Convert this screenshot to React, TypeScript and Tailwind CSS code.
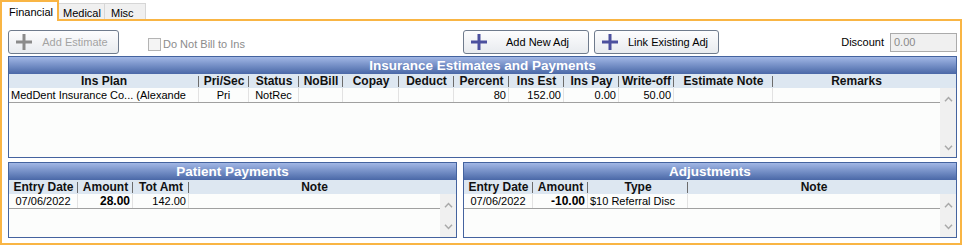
type Align = 'left' | 'right' | 'center';
type Col = { label: string; w: number; align: Align; pad?: string };
type Cell = { text: string; bold?: boolean };

const insCols: Col[] = [
  { label: 'Ins Plan', w: 190, align: 'left', pad: 'pl-[2px]' },
  { label: 'Pri/Sec', w: 50, align: 'center' },
  { label: 'Status', w: 50, align: 'center' },
  { label: 'NoBill', w: 44, align: 'center' },
  { label: 'Copay', w: 56, align: 'right' },
  { label: 'Deduct', w: 55, align: 'right' },
  { label: 'Percent', w: 55, align: 'right' },
  { label: 'Ins Est', w: 55, align: 'right' },
  { label: 'Ins Pay', w: 55, align: 'right' },
  { label: 'Write-off', w: 55, align: 'right' },
  { label: 'Estimate Note', w: 99, align: 'left' },
  { label: 'Remarks', w: 167, align: 'left' },
];

const insRow: Cell[] = [
  { text: 'MedDent Insurance Co... (Alexande' },
  { text: 'Pri' },
  { text: 'NotRec' },
  { text: '' },
  { text: '' },
  { text: '' },
  { text: '80' },
  { text: '152.00' },
  { text: '0.00' },
  { text: '50.00' },
  { text: '' },
  { text: '' },
];

const payCols: Col[] = [
  { label: 'Entry Date', w: 69, align: 'center' },
  { label: 'Amount', w: 55, align: 'right' },
  { label: 'Tot Amt', w: 56, align: 'right' },
  { label: 'Note', w: 251, align: 'left' },
];

const adjCols: Col[] = [
  { label: 'Entry Date', w: 69, align: 'center' },
  { label: 'Amount', w: 55, align: 'right' },
  { label: 'Type', w: 100, align: 'left', pad: 'pl-[2px]' },
  { label: 'Note', w: 252, align: 'left' },
];

const alignClass: Record<Align, string> = {
  left: 'justify-start',
  right: 'justify-end pr-[2px]',
  center: 'justify-center',
};

function Chevron({ up }: { up?: boolean }) {
  return (
    <svg width="9" height="6" viewBox="0 0 9 6">
      <path
        d={up ? 'M1 5.2 L4.5 1.5 L8 5.2' : 'M1 0.8 L4.5 4.5 L8 0.8'}
        fill="none"
        stroke="#a9a9a9"
        strokeWidth="1.5"
      />
    </svg>
  );
}

function Plus({ color }: { color: string }) {
  return (
    <svg width="16" height="16" viewBox="0 0 16 16" className="shrink-0">
      <path d="M6.5 0h3v6.5H16v3H9.5V16h-3V9.5H0v-3h6.5z" fill={color} />
    </svg>
  );
}

function Grid({
  title,
  cols,
  row,
  className,
  bodyPad,
}: {
  title: string;
  cols: Col[];
  row: Cell[];
  className: string;
  bodyPad: string;
}) {
  return (
    <div className={`flex flex-col border border-[#44639f] bg-[#fcfdfc] ${className}`}>
      <div className="h-[17px] shrink-0 bg-linear-to-b from-[#a2b7e5] to-[#4a68a7] text-center text-[13.5px] font-bold leading-[17px] text-white">
        {title}
      </div>
      <div className="flex h-[14px] shrink-0 bg-[#dde7f1] text-[12px] font-bold leading-[14px] text-[#111]">
        {cols.map((c, i) => (
          <div
            key={c.label}
            style={{ width: c.w }}
            className={`relative shrink-0 whitespace-nowrap text-center ${
              i < cols.length - 1
                ? 'after:absolute after:right-0 after:top-[2px] after:h-[11px] after:w-px after:bg-[#6c6c6c]'
                : ''
            }`}
          >
            {c.label}
          </div>
        ))}
        <div className="flex-1" />
      </div>
      <div className="flex min-h-0 flex-1">
        <div className="flex-1">
          <div className="flex h-[15px] border-b border-[#a0a0a0] text-[11px] leading-[14px] text-black">
            {cols.map((c, i) => (
              <div
                key={c.label}
                style={{ width: c.w }}
                className={`flex shrink-0 items-center whitespace-nowrap overflow-hidden ${alignClass[c.align]} ${c.pad ?? ''} ${
                  i < cols.length - 1 ? 'border-r border-[#e2e2e2]' : ''
                } ${row[i].bold ? 'text-[12px] font-bold' : ''}`}
              >
                {row[i].text}
              </div>
            ))}
          </div>
        </div>
        <div className={`flex w-[16px] shrink-0 flex-col items-center justify-between bg-[#f0f0f0] ${bodyPad}`}>
          <Chevron up />
          <Chevron />
        </div>
      </div>
    </div>
  );
}

function Button({ label, disabled, className }: { label: string; disabled?: boolean; className: string }) {
  return (
    <div
      className={`flex h-[24px] items-center rounded-[3px] border border-[#6f7b8d] bg-linear-to-b from-[#fdfdfe] to-[#e8ebef] pl-[7px] text-[11px] ${
        disabled ? 'text-[#a3a3a3]' : 'text-black'
      } ${className}`}
    >
      <Plus color={disabled ? '#8b8b8b' : '#4c509e'} />
      <span className="flex-1 text-center">{label}</span>
    </div>
  );
}

export default function App() {
  return (
    <div className="h-[247px] w-[963px] bg-white font-['Liberation_Sans',Arial,sans-serif] text-[11px] text-black">
      <div className="flex h-[19px] items-start">
        <div className="relative z-10 h-[21px] w-[59px] border-2 border-b-0 border-[#f9b544] bg-white pl-[7px] pt-[4px] leading-[13px]">
          Financial
        </div>
        <div className="mt-[3px] h-[16px] w-[46px] border border-b-0 border-l-0 border-[#d6d6d6] bg-[#f0f0f0] pl-[4px] pt-[2px] leading-[14px]">
          Medical
        </div>
        <div className="mt-[3px] h-[16px] w-[41px] border border-b-0 border-l-0 border-[#d6d6d6] bg-[#f0f0f0] pl-[6px] pt-[2px] leading-[14px]">
          Misc
        </div>
      </div>

      <div className="flex h-[226px] w-[962px] flex-col border-2 border-[#f9b544] bg-white">
        <div className="mt-[9px] flex h-[24px] items-start">
          <Button label="Add Estimate" disabled className="ml-[6px] w-[111px]" />
          <label className="ml-[29px] mt-[7px] flex w-[315px] items-center gap-[2px] text-[#8c8c8c]">
            <span className="h-[13px] w-[13px] border border-[#b4b4b4] bg-[#f4f4f4]" />
            <span className="leading-[14px]">Do Not Bill to Ins</span>
          </label>
          <Button label="Add New Adj" className="w-[126px]" />
          <Button label="Link Existing Adj" className="ml-[5px] w-[125px]" />
          <div className="flex flex-1 items-center justify-end pt-[3px]">
            <span className="mr-[6px] leading-[19px]">Discount</span>
            <div className="mr-[3px] h-[19px] w-[67px] border border-[#ababab] bg-[#f0f0f0] pl-[3px] leading-[17px] text-[#8a8a8a]">
              0.00
            </div>
          </div>
        </div>

        <Grid
          title="Insurance Estimates and Payments"
          cols={insCols}
          row={insRow}
          className="ml-[6px] mt-[2px] h-[102px] w-[949px]"
          bodyPad="pt-[8px] pb-[6px]"
        />

        <div className="mt-[4px] flex">
          <Grid
            title="Patient Payments"
            cols={payCols}
            row={[{ text: '07/06/2022' }, { text: '28.00', bold: true }, { text: '142.00' }, { text: '' }]}
            className="ml-[6px] h-[76px] w-[449px]"
            bodyPad="pt-[8px] pb-[7px]"
          />
          <Grid
            title="Adjustments"
            cols={adjCols}
            row={[{ text: '07/06/2022' }, { text: '-10.00', bold: true }, { text: '$10 Referral Disc' }, { text: '' }]}
            className="ml-[6px] h-[76px] w-[494px]"
            bodyPad="pt-[8px] pb-[7px]"
          />
        </div>
      </div>
    </div>
  );
}
